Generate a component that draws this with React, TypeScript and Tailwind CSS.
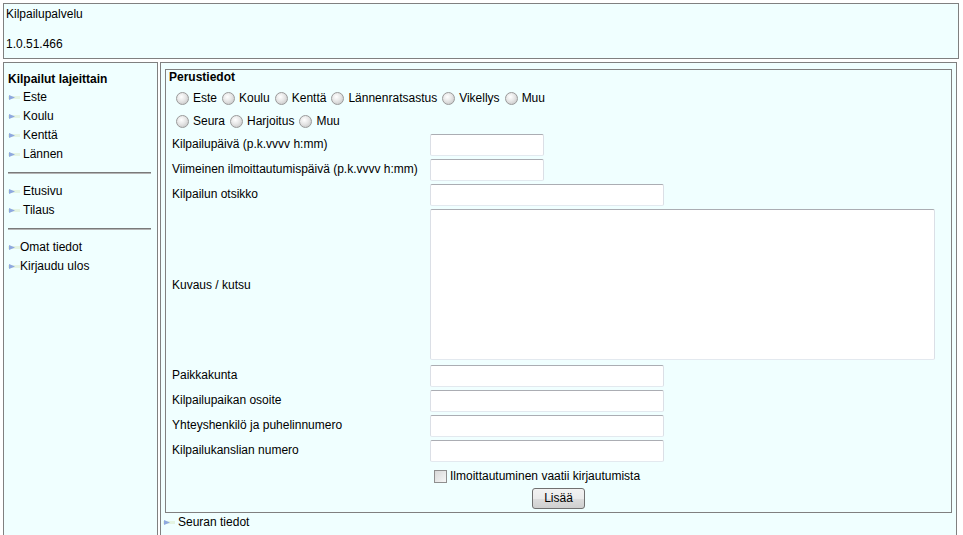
const SPORTS = ["Este", "Koulu", "Kenttä", "Lännenratsastus", "Vikellys", "Muu"];
const KINDS = ["Seura", "Harjoitus", "Muu"];

const INPUT =
  "h-[22px] bg-white border border-[#dbdfe6] border-t-[#abadb3] border-b-[#e3e9ef] rounded-[2px]";

function Bullet({ w = 12 }: { w?: number }) {
  return (
    <svg width={w} height="7" viewBox={`0 0 ${w} 7`} className="shrink-0">
      <rect x="0" y="2" width={w} height="3" fill="#e4f4e2" />
      <path d="M1 1 L7 3.5 L1 6 Z" fill="#8fa9e0" />
    </svg>
  );
}

function Radio() {
  return (
    <span className="inline-block w-[13px] h-[13px] rounded-full border border-[#9a9a9a] bg-[radial-gradient(circle_at_40%_35%,#ffffff_0%,#e6e6e6_45%,#bdbdbd_100%)] ml-[2px] mr-[4px] shrink-0" />
  );
}

function NavItem({ label, indent = "pl-[15px]" }: { label: string; indent?: string }) {
  return (
    <div className="h-[19px] flex items-center relative">
      <span className="absolute left-0 top-[6px]">
        <Bullet />
      </span>
      <span className={indent}>{label}</span>
    </div>
  );
}

function Row({ label, wide }: { label: string; wide?: boolean }) {
  return (
    <div className="h-[25px] flex items-center">
      <div className="w-[261px] pl-[3px] shrink-0">{label}</div>
      <div className={`${INPUT} ${wide ? "w-[234px]" : "w-[114px]"}`} />
    </div>
  );
}

export default function App() {
  return (
    <div
      className="p-[3px] text-[12px] leading-[15px] text-black bg-white"
      style={{ fontFamily: '"Liberation Sans", Arial, sans-serif' }}
    >
      <div className="w-[956px] h-[56px] border border-[#808080] bg-[#f0ffff] pt-[3px] pl-[2px]">
        <div>Kilpailupalvelu</div>
        <div className="h-[15px]" />
        <div>1.0.51.466</div>
      </div>

      <div className="flex gap-[2px] mt-[3px]">
        <aside className="w-[155px] h-[560px] border border-[#808080] bg-[#f0ffff] pt-[6px] pl-[4px] pr-[5px] shrink-0">
          <div className="h-[19px] flex items-center font-bold pt-[1px]">Kilpailut lajeittain</div>
          <NavItem label="Este" />
          <NavItem label="Koulu" />
          <NavItem label="Kenttä" />
          <NavItem label="Lännen" />
          <div className="my-[8px] h-[2px] border-t border-t-[#7a7a7a] border-b border-b-[#b4b4b4] mr-[1px]" />
          <NavItem label="Etusivu" />
          <NavItem label="Tilaus" />
          <div className="my-[8px] h-[2px] border-t border-t-[#7a7a7a] border-b border-b-[#b4b4b4] mr-[1px]" />
          <NavItem label="Omat tiedot" indent="pl-[12px]" />
          <NavItem label="Kirjaudu ulos" indent="pl-[12px]" />
        </aside>

        <main className="w-[797px] h-[560px] border border-[#808080] bg-[#f0ffff] pt-[6px] px-[4px] shrink-0">
          <div className="border border-[#808080] px-[3px] pb-[3px]">
            <div className="h-[14px] leading-[14px] font-bold">Perustiedot</div>
            <div className="mt-[2px] h-[23px] flex items-center pl-[5px] pt-[1px]">
              {SPORTS.map((s) => (
                <span key={s} className="flex items-center mr-[3px]">
                  <Radio />
                  <span>{s}</span>
                </span>
              ))}
            </div>
            <div className="h-[23px] flex items-center pl-[5px] pt-[1px]">
              {KINDS.map((s, i) => (
                <span key={s + i} className="flex items-center mr-[3px]">
                  <Radio />
                  <span>{s}</span>
                </span>
              ))}
            </div>

            <Row label="Kilpailupäivä (p.k.vvvv h:mm)" />
            <Row label="Viimeinen ilmoittautumispäivä (p.k.vvvv h:mm)" />
            <Row label="Kilpailun otsikko" wide />

            <div className="h-[156px] flex items-center">
              <div className="w-[261px] pl-[3px] shrink-0">Kuvaus / kutsu</div>
              <div className={`${INPUT} w-[505px] h-[151px] self-start mt-[2px]`} />
            </div>

            <Row label="Paikkakunta" wide />
            <Row label="Kilpailupaikan osoite" wide />
            <Row label="Yhteyshenkilö ja puhelinnumero" wide />
            <Row label="Kilpailukanslian numero" wide />

            <div className="h-[25px] flex items-center pl-[265px] pt-[1px]">
              <span className="inline-block w-[13px] h-[13px] border border-[#8f8f8f] bg-[linear-gradient(135deg,#d8d8d8,#f6f6f6)] mr-[3px]" />
              <span>Ilmoittautuminen vaatii kirjautumista</span>
            </div>

            <div className="h-[21px] flex pl-[363px]">
              <button className="w-[53px] h-[21px] border border-[#707070] rounded-[3px] bg-[linear-gradient(#f2f2f2_0%,#ebebeb_50%,#dddddd_51%,#cfcfcf_100%)] text-[12px] leading-[15px] text-black">
                Lisää
              </button>
            </div>
          </div>

          <div className="h-[19px] flex items-center relative">
            <span className="absolute left-[-2px] top-[6px]">
              <Bullet />
            </span>
            <span className="pl-[13px]">Seuran tiedot</span>
          </div>
        </main>
      </div>
    </div>
  );
}
